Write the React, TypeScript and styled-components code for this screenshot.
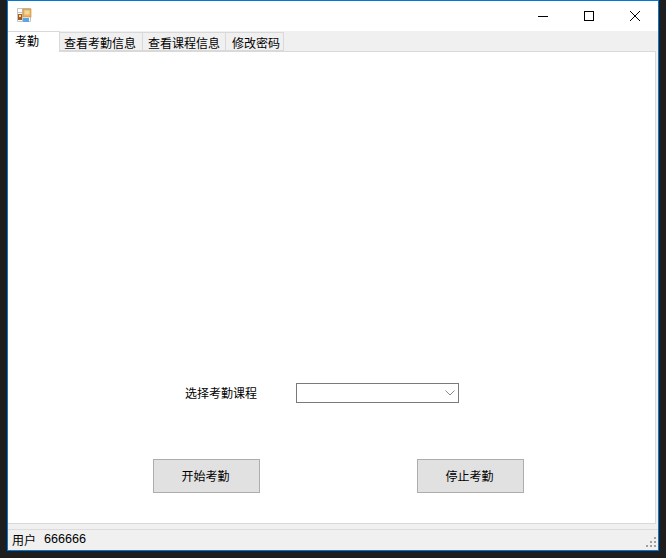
import React from "react";
import styled, { createGlobalStyle } from "styled-components";

const Global = createGlobalStyle`
  html, body { margin: 0; padding: 0; background: #1e1e1e; }
  #root { width: 666px; height: 558px; overflow: hidden; }
`;
const font = `"Noto Sans CJK SC", "Liberation Sans", sans-serif`;

const Desktop = styled.div`
  width: 666px;
  height: 558px;
  box-sizing: border-box;
  padding: 0 7px 7px 7px;
  background: #1e1e1e;
  font-family: ${font};
`;
const Window = styled.div`
  width: 652px;
  height: 551px;
  box-sizing: border-box;
  border: 1px solid #0078d7;
  background: #f0f0f0;
  display: flex;
  flex-direction: column;
`;
const TitleBar = styled.div`
  height: 30px;
  flex: none;
  background: #fff;
  display: flex;
  align-items: center;
  justify-content: space-between;
  padding-left: 9px;
`;
const AppIcon = styled.svg`
  width: 15px;
  height: 15px;
  display: block;
  margin-top: -2px;
`;
const Controls = styled.div`
  display: flex;
  height: 100%;
`;
const Control = styled.div`
  width: 46px;
  height: 30px;
  display: flex;
  align-items: center;
  justify-content: center;
`;
const TabStrip = styled.div`
  height: 20px;
  flex: none;
  display: flex;
  align-items: flex-end;
`;
const Tab = styled.div<{ $active?: boolean; $w: number; $pad: number }>`
  box-sizing: border-box;
  width: ${(p) => p.$w}px;
  height: ${(p) => (p.$active ? 21 : 19)}px;
  margin-bottom: ${(p) => (p.$active ? -1 : 0)}px;
  position: relative;
  z-index: ${(p) => (p.$active ? 1 : 0)};
  background: ${(p) => (p.$active ? "#fff" : "#f0f0f0")};
  border: 1px solid #d9d9d9;
  border-left: ${(p) => (p.$active ? "none" : "1px solid #d9d9d9")};
  border-bottom: ${(p) => (p.$active ? "none" : "1px solid #d9d9d9")};
  margin-left: ${(p) => (p.$active ? 0 : -1)}px;
  font-size: 12px;
  line-height: ${(p) => (p.$active ? 18 : 19)}px;
  padding-left: ${(p) => p.$pad}px;
  color: #000;
  white-space: nowrap;
`;
const TabPage = styled.div`
  flex: none;
  height: 473px;
  width: 648px;
  box-sizing: border-box;
  background: #fff;
  border: 1px solid #d9d9d9;
  border-left: none;
  display: flex;
  flex-direction: column;
  align-items: flex-start;
`;
const FormRow = styled.div`
  margin-top: 331px;
  margin-left: 177px;
  display: flex;
  align-items: center;
  height: 20px;
`;
const FieldLabel = styled.div`
  box-sizing: border-box;
  width: 111px;
  padding: 0 0 2px 0;
  font-size: 12px;
  color: #000;
`;
const Combo = styled.div`
  box-sizing: border-box;
  width: 163px;
  height: 20px;
  border: 1px solid #7a7a7a;
  background: #fff;
  display: flex;
  align-items: center;
  justify-content: flex-end;
  padding-right: 3px;
`;
const ButtonRow = styled.div`
  margin-top: 56px;
  margin-left: 145px;
  display: flex;
  gap: 157px;
`;
const Button = styled.div`
  box-sizing: border-box;
  width: 107px;
  height: 34px;
  padding: 0 2px 2px 0;
  background: #e1e1e1;
  border: 1px solid #adadad;
  font-size: 12px;
  color: #000;
  display: flex;
  align-items: center;
  justify-content: center;
`;
const StatusBar = styled.div`
  flex: 1;
  margin-top: 5px;
  border-top: 1px solid #dcdcdc;
  display: flex;
  align-items: center;
  font-size: 12px;
  color: #000;
  padding: 0 0 2px 4px;
  position: relative;
`;
const StatusUser = styled.span`
  width: 32px;
`;
const StatusValue = styled.span`
  font-family: "Liberation Sans", sans-serif;
  font-size: 12.6px;
`;
const Grip = styled.svg`
  position: absolute;
  right: 1px;
  bottom: 2px;
  width: 11px;
  height: 11px;
`;

export default function App() {
  return (
    <>
      <Global />
      <Desktop>
        <Window>
          <TitleBar>
            <AppIcon viewBox="0 0 15 15">
              <rect x="0" y="0" width="14" height="14" fill="#fff" />
              <path d="M0.5 0.5H13.5V13.5H0.5ZM0.5 4.5H6M5.5 0.5V13.5M0.5 10.5H6" fill="none" stroke="#c4c4c4" />
              <rect x="6" y="1" width="8" height="8" fill="#ecb45c" stroke="#c08a3c" strokeWidth="0.6" />
              <rect x="7.5" y="2.5" width="5" height="4" fill="#f6d79a" />
              <rect x="1" y="6" width="4" height="6" fill="#a9591f" />
              <rect x="2" y="7" width="2" height="2" fill="#f6e0a0" />
              <rect x="6" y="10" width="6" height="4" fill="#5aa5ec" />
            </AppIcon>
            <Controls>
              <Control>
                <svg width="10" height="10" viewBox="0 0 10 10">
                  <path d="M0 5.5H10" stroke="#000" strokeWidth="1" />
                </svg>
              </Control>
              <Control>
                <svg width="10" height="10" viewBox="0 0 10 10">
                  <rect x="0.5" y="0.5" width="9" height="9" fill="none" stroke="#000" />
                </svg>
              </Control>
              <Control>
                <svg width="10" height="10" viewBox="0 0 10 10">
                  <path d="M0 0L10 10M10 0L0 10" stroke="#000" strokeWidth="1" fill="none" />
                </svg>
              </Control>
            </Controls>
          </TitleBar>
          <TabStrip>
            <Tab $active $w={52} $pad={7}>考勤</Tab>
            <Tab $w={84} $pad={4}>查看考勤信息</Tab>
            <Tab $w={84} $pad={5}>查看课程信息</Tab>
            <Tab $w={59} $pad={6}>修改密码</Tab>
          </TabStrip>
          <TabPage>
            <FormRow>
              <FieldLabel>选择考勤课程</FieldLabel>
              <Combo>
                <svg width="10" height="6" viewBox="0 0 10 6">
                  <path d="M0.5 0.5L5 5L9.5 0.5" fill="none" stroke="#8a8a8a" />
                </svg>
              </Combo>
            </FormRow>
            <ButtonRow>
              <Button>开始考勤</Button>
              <Button>停止考勤</Button>
            </ButtonRow>
          </TabPage>
          <StatusBar>
            <StatusUser>用户</StatusUser>
            <StatusValue>666666</StatusValue>
            <Grip viewBox="0 0 11 11">
              <g fill="#a0a0a0">
                <rect x="8" y="0" width="2" height="2" />
                <rect x="4" y="4" width="2" height="2" />
                <rect x="8" y="4" width="2" height="2" />
                <rect x="0" y="8" width="2" height="2" />
                <rect x="4" y="8" width="2" height="2" />
                <rect x="8" y="8" width="2" height="2" />
              </g>
            </Grip>
          </StatusBar>
        </Window>
      </Desktop>
    </>
  );
}
